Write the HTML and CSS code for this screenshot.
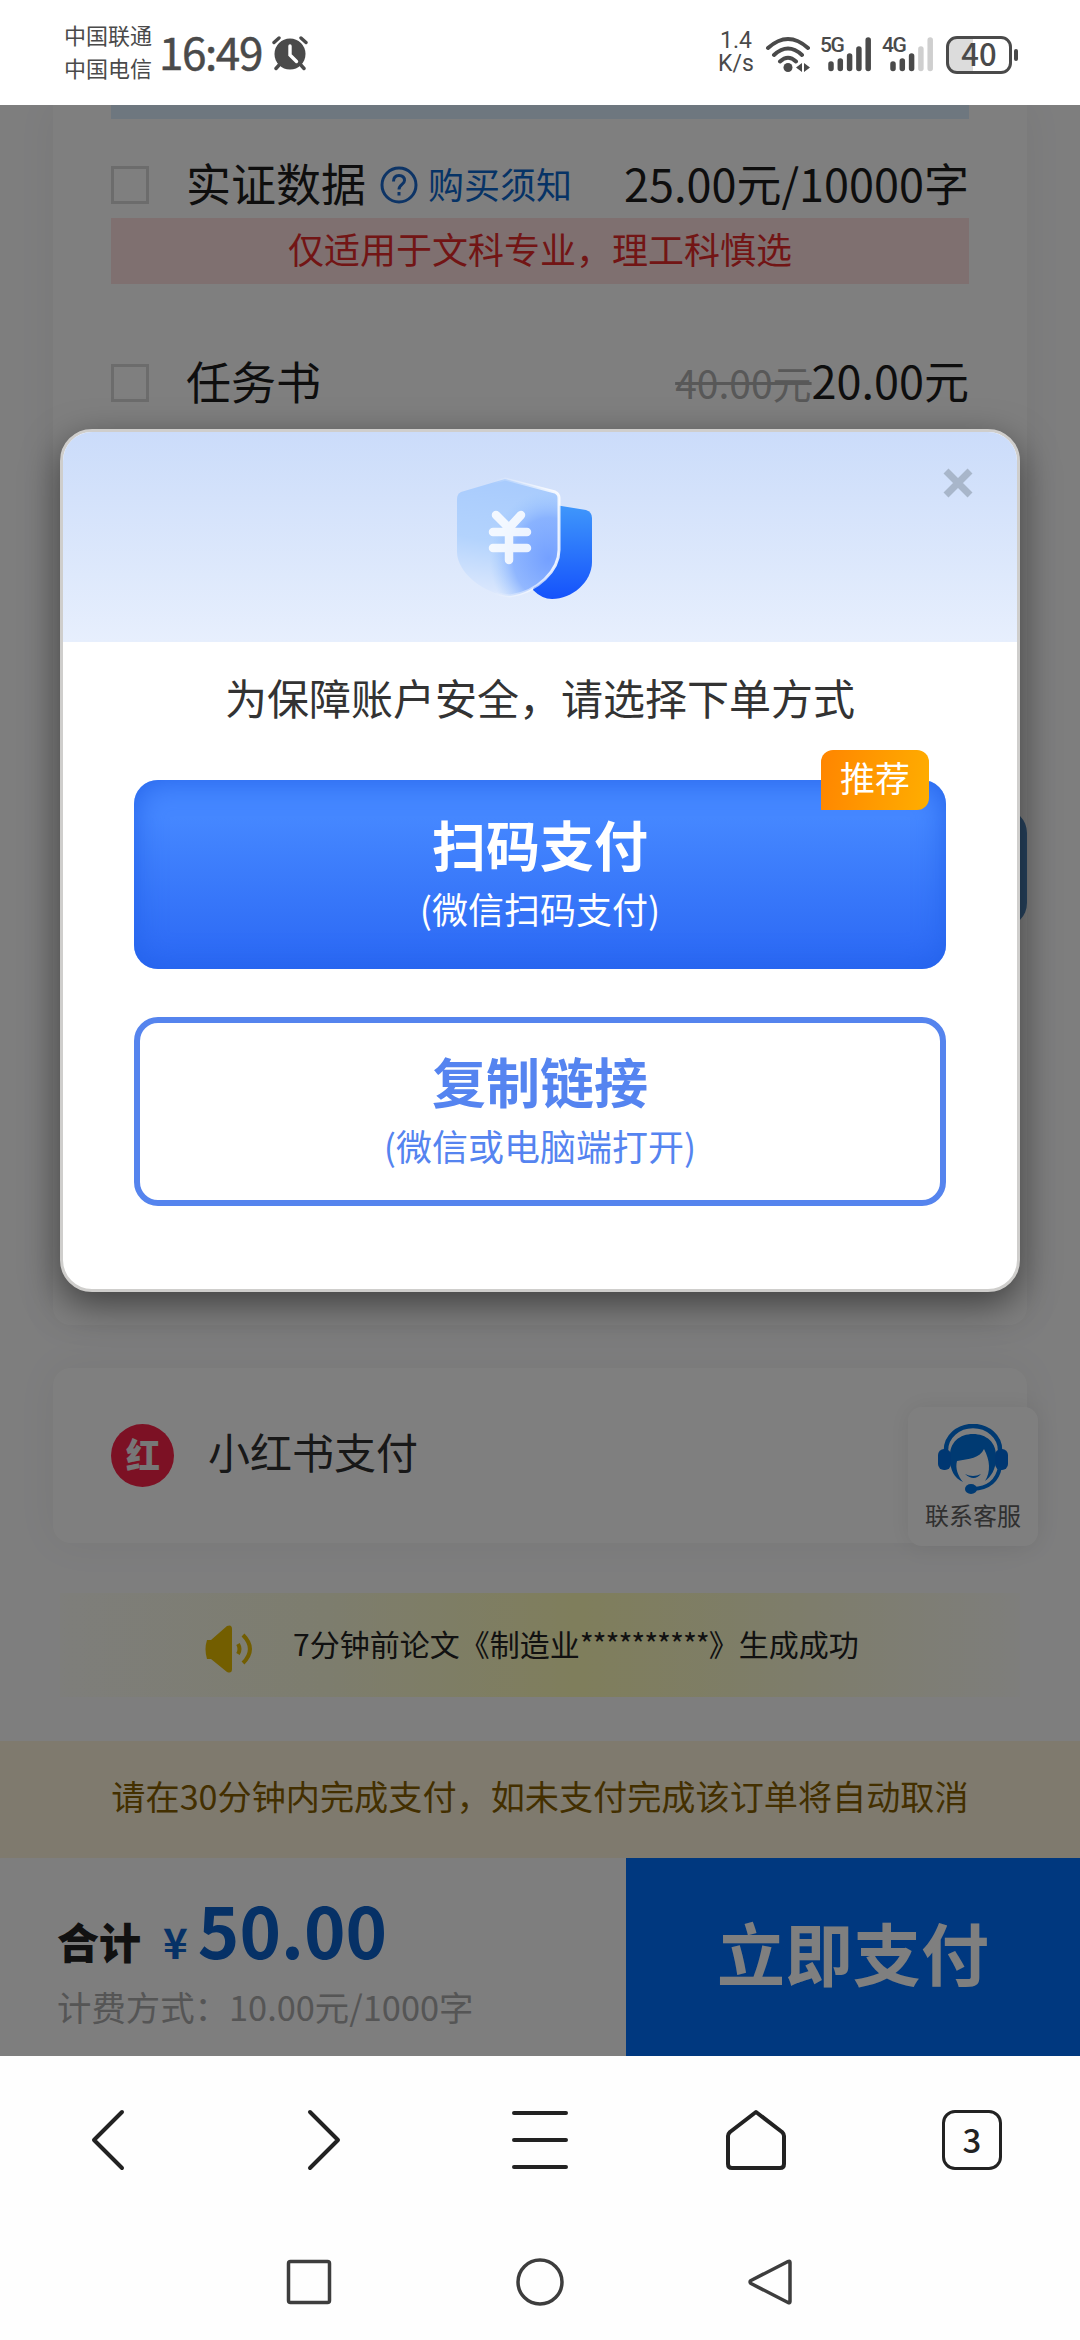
FILE: index.html
```html
<!DOCTYPE html>
<html lang="zh-CN">
<head>
<meta charset="utf-8">
<title>订单支付</title>
<link rel="stylesheet" href="styles.css">
</head>
<body>
<div class="screen">
  <header class="status">
    <div class="carriers"><span>中国联通</span><span>中国电信</span></div>
    <div class="clock">16:49</div>
    <svg class="alarm" width="36" height="36" viewBox="0 0 36 36" fill="none" stroke="#4a4a4a" stroke-width="3.4" stroke-linecap="round">
      <circle cx="18" cy="19" r="15.5" fill="#4a4a4a" stroke="none"/>
      <path d="M2 7.5 7 3M34 7.5 29 3M8 29l-4 4.500M28 29l4 4.500"/>
      <path d="M18 11v9l6.500 6.500" stroke="#fff"/>
    </svg>
    <div class="status-right">
      <div class="speed"><span>1.4</span><span>K/s</span></div>
      <svg width="46" height="38" viewBox="0 0 46 38" fill="none" stroke="#4a4a4a" stroke-width="4" stroke-linecap="round">
        <path d="M3 12Q23-6 43 12M9 19Q23 6 37 19M15 25.500Q23 18 31 25.500"/>
        <circle cx="23" cy="31.500" r="4.500" fill="#4a4a4a" stroke="none"/>
        <path d="M37 27v9l-6-4.500zM39 27v9l6-4.500z" fill="#4a4a4a" stroke="none"/>
      </svg>
      <div class="signal sig5"><span class="net">5G</span>
        <svg width="44" height="36" viewBox="0 0 44 36" stroke="#4a4a4a" stroke-width="5.500" stroke-linecap="round"><path d="M3 27v4.500M12.300 24v7.500M21.600 19v12.500M30.900 12v19.500M40.200 3v28.500"/></svg>
      </div>
      <div class="signal sig4"><span class="net">4G</span>
        <svg width="44" height="36" viewBox="0 0 44 36" stroke="#4a4a4a" stroke-width="5.500" stroke-linecap="round"><path d="M3 27v4.500M12.300 24v7.500M21.600 19v12.500"/><path d="M30.900 12v19.500M40.200 3v28.500" stroke="#cfcfcf"/></svg>
      </div>
      <div class="battery"><span>40</span></div><i class="nub"></i>
    </div>
  </header>

  <main class="page">
    <section class="card options">
      <div class="strip"></div>
      <div class="row first">
        <i class="check"></i><span class="name">实证数据</span>
        <svg class="help" width="38" height="38" viewBox="0 0 38 38" fill="none" stroke="#1b69cc" stroke-width="3"><circle cx="19" cy="19" r="17"/><path d="M13.500 15.500q0-6 5.500-6t5.500 5c0 4-5.500 4-5.500 9M19 26v3.500"/></svg>
        <span class="link">购买须知</span><span class="price">25.00元/10000字</span>
      </div>
      <div class="warn">仅适用于文科专业，理工科慎选</div>
      <div class="row second">
        <i class="check"></i><span class="name">任务书</span>
        <span class="price"><s>40.00元</s>20.00元</span>
      </div>
      <div class="apply"></div>
    </section>

    <section class="card pay">
      <svg width="63" height="63" viewBox="0 0 63 63"><circle cx="31.500" cy="31.500" r="31.500" fill="#f92348"/></svg>
      <span class="red-mark">红</span>
      <span>小红书支付</span>
    </section>

    <div class="notice">
      <svg width="50" height="48" viewBox="0 0 50 48" fill="none" stroke="#e6bc00" stroke-width="4"><path d="M2 15h4L22 1Q27-1 27 4v40q0 5-5 3L6 34H2Q-1 24 2 15Z" fill="#e6bc00" stroke="none"/><path d="M33 19q3 5 0 10M38 10q14 14 0 28"/></svg>
      <p>7分钟前论文《制造业<span class="stars">**********</span>》生成成功</p>
    </div>

    <div class="deadline">请在30分钟内完成支付，如未支付完成该订单将自动取消</div>
    <div class="checkout">
      <div class="total">
        <div class="sum"><b>合计</b><span class="yen">¥</span><span class="amount">50.00</span></div>
        <div class="rate">计费方式：10.00元/1000字</div>
      </div>
      <div class="pay-now">立即支付</div>
    </div>

    <aside class="service">
      <svg width="70" height="70" viewBox="0 0 70 70">
        <path d="M8 26a27 24 0 0 1 54 0" fill="none" stroke="#0074e4" stroke-width="4.500"/>
        <path d="M12 34C11 18 22 10 35 10s24 8 23 24c0 11-5 19-11 23 6-9 5-21-1-32-4 9-15 10-27 12-2 7 1 15 6 21-9-4-13-12-13-24Z" fill="#0074e4"/>
        <rect x="0" y="25" width="13" height="21" rx="6" fill="#006fe4"/><rect x="57" y="25" width="13" height="21" rx="6" fill="#006fe4"/>
        <path d="M27 50q8 4 16 0-7 8-16 0Z" fill="#0074e4"/>
        <path d="M62 43Q58 64 35 65" fill="none" stroke="#0074e4" stroke-width="4"/><ellipse cx="33" cy="65" rx="6" ry="5" fill="#0074e4"/>
      </svg>
      <span>联系客服</span>
    </aside>

    <div class="overlay">
      <section class="modal">
        <div class="modal-head">
          <svg class="shield" width="140" height="126" viewBox="0 0 140 126">
            <defs>
              <linearGradient id="back" x1="0" y1="0" x2="0" y2="1"><stop stop-color="#4098fb"/><stop offset="1" stop-color="#1552fb"/></linearGradient>
              <linearGradient id="front" x1=".55" y1="0" x2=".4" y2="1"><stop stop-color="#a8cbfd"/><stop offset=".55" stop-color="#b3d3fd"/><stop offset="1" stop-color="#dce8fd"/></linearGradient>
              <linearGradient id="edge" x1="0" y1="0" x2="1" y2="0"><stop offset=".35" stop-color="#fff" stop-opacity="0"/><stop offset=".95" stop-color="#fff" stop-opacity=".85"/></linearGradient>
              <radialGradient id="glow" cx=".9" cy=".68" r=".58"><stop stop-color="#74a0ff"/><stop offset=".6" stop-color="#7da9ff" stop-opacity=".75"/><stop offset="1" stop-color="#9cc6ff" stop-opacity="0"/></radialGradient>
            </defs>
            <path d="M95 29 132 35q6 2 6 8v44c0 20-20 37-40 37q-10 0-19-9Z" fill="url(#back)"/>
            <path d="M51 4 101 17q4 2 4 6v52c0 20-21 42-49 46-27-2-53-24-53-44V24q0-5 4-7Z" fill="url(#front)"/>
            <path d="M51 4 101 17q4 2 4 6v52c0 20-21 42-49 46-27-2-53-24-53-44V24q0-5 4-7Z" fill="url(#glow)" stroke="url(#edge)" stroke-width="3"/>
            <path d="M42 40 55 53 67 40M39 57H73M39 73H73M55 53V85" fill="none" stroke="#fff" stroke-opacity=".85" stroke-width="8.500" stroke-linecap="round" stroke-linejoin="round"/>
          </svg>
          <svg class="close" width="30" height="30" viewBox="0 0 30 30" stroke="#a8b6ca" stroke-width="7"><path d="M3 3 27 27M27 3 3 27"/></svg>
        </div>
        <div class="modal-body">
          <h1>为保障账户安全，请选择下单方式</h1>
          <div class="choice primary"><strong>扫码支付</strong><span>(微信扫码支付)</span><em>推荐</em></div>
          <div class="choice outline"><strong>复制链接</strong><span>(微信或电脑端打开)</span></div>
        </div>
      </section>
    </div>
  </main>

  <nav class="browser">
    <svg viewBox="0 0 64 64"><path d="M46 4 18 32 46 60"/></svg>
    <svg viewBox="0 0 64 64"><path d="M18 4 46 32 18 60"/></svg>
    <svg viewBox="0 0 64 64"><path d="M6 5H58M6 32H58M6 59H58"/></svg>
    <svg viewBox="0 0 64 64"><path d="M32 4 58 24q2 2 2 4v28q0 4-4 4H8q-4 0-4-4V28q0-2 2-4Z"/></svg>
    <div class="tabs"><span>3</span></div>
  </nav>
  <nav class="system">
    <svg viewBox="0 0 50 50"><rect x="4.500" y="4.500" width="41" height="41" rx="2"/></svg>
    <svg viewBox="0 0 50 50"><circle cx="25" cy="25" r="22"/></svg>
    <svg viewBox="0 0 50 50"><path d="M5 23.500 42 4.500q2-1 2 1v39q0 2-2 1L5 26.500q-2-1.500 0-3Z"/></svg>
  </nav>
</div>
</body>
</html>
```

FILE: styles.css
```css
* { box-sizing: border-box; margin: 0; padding: 0; }
body { font-family: "Noto Sans CJK SC", sans-serif; background: #fdfdfd; }
.screen { width: 1080px; height: 2340px; display: flex; flex-direction: column; overflow: hidden; white-space: nowrap; }
.status { height: 105px; display: flex; align-items: center; padding: 0 62px 0 64px; color: #4a4a4a; background: #fff; }
.carriers { display: flex; flex-direction: column; font-size: 22px; line-height: 33px; width: 88px; margin-bottom: 3px; }
.clock { width: 106px; margin-left: 7px; margin-bottom: 3px; font-size: 44px; font-weight: 400; line-height: 60px; letter-spacing: -1.4px; -webkit-text-stroke: .5px #4a4a4a; }
.alarm { margin-left: 7px; margin-top: 1px; }
.status-right { margin-left: auto; display: flex; align-items: center; margin-top: 4px; }
.speed { display: flex; flex-direction: column; align-items: center; font: 23px/23px Roboto, sans-serif; width: 38px; margin-right: 10px; margin-bottom: 2px; }
.speed span { height: 23px; line-height: 20px; }
.signal { position: relative; width: 52px; height: 36px; display: flex; justify-content: flex-end; margin-left: 9px; }
.sig4 { margin-left: 10px; }
.net { position: absolute; left: 0; top: -2px; font: 500 21px/21px Roboto, sans-serif; letter-spacing: -1.5px; }
.battery { width: 66px; height: 38px; margin-left: 12px; border: 3px solid #4a4a4a; border-radius: 11px; background: linear-gradient(90deg, #dcdcdc 40%, #fff 40%); display: flex; align-items: center; justify-content: center; font-size: 31px; font-weight: 500; line-height: 28px; }
.battery span { margin-top: -4px; }
.nub { width: 4px; height: 12px; margin-left: 2px; border-radius: 2px; background: #4a4a4a; }

.page { position: relative; height: 1951px; display: flex; flex-direction: column; background: #fcfcfd; overflow: hidden; }
.card { margin: 0 53px; background: #fff; border-radius: 18px; box-shadow: 0 0 42px rgba(0,0,0,.055); }
.options { height: 1220px; padding: 0 58px; display: flex; flex-direction: column; border-radius: 0 0 18px 18px; }
.strip { height: 14px; background: #dceeff; }
.row { display: flex; align-items: center; height: 60px; font-size: 45px; line-height: 56px; color: #1d1d1d; }
.row span { padding-bottom: 4px; }
.first { margin-top: 36px; }
.second { margin-top: 69px; margin-bottom: -2px; }
.check { width: 38px; height: 38px; border: 3px solid #d8d8d8; }
.name { margin-left: 37px; }
.help { margin-left: 14px; }
.row .link { margin-left: 10px; font-size: 36px; color: #0d66cc; }
.price { margin-left: auto; }
.price s { font-size: 39px; color: #b0b0b0; }
.warn { margin-top: 3px; height: 66px; line-height: 60px; text-align: center; font-size: 36px; color: #e52b2b; background: #ffe0e0; }
.apply { width: 200px; height: 118px; margin: 398px -58px 0 auto; background: #5088c0; border-radius: 24px; }
.pay { height: 175px; margin-top: 43px; padding: 0 58px; display: flex; align-items: center; position: relative; font-size: 42px; color: #303030; }
.pay > span:last-child { margin-left: 34px; margin-top: -10px; }
.red-mark { position: absolute; left: 73px; top: 68px; width: 33px; font-size: 34px; line-height: 36px; font-weight: 900; color: #eee; text-align: center; }
.notice { height: 104px; margin: 50px 60px 0; display: flex; align-items: center; padding-left: 145px; font-size: 30px; color: #222; background: linear-gradient(90deg, #fcfcf6, #fbfbdc 28%, #fffcb8 54%, #fcfbd8 78%, #fcfcf8); }
.notice svg { margin-top: 8px; }
.notice p { margin-left: 38px; margin-top: -5px; }
.stars { letter-spacing: -1.1px; }
.deadline { height: 117px; margin-top: 44px; line-height: 109px; text-align: center; font-size: 34.15px; color: #875f00; background: #fff5dd; }
.checkout { display: flex; height: 198px; }
.total { width: 626px; padding: 26px 0 0 57px; }
.sum { display: flex; align-items: baseline; height: 94px; line-height: 88px; color: #0c62cc; font-weight: 700; }
.sum b { font-size: 42px; color: #222; }
.yen { font-size: 42px; margin-left: 22px; }
.amount { font-size: 70.5px; margin-left: 10px; }
.rate { font-size: 34.4px; line-height: 56px; color: #aaa; }
.pay-now { flex: 1; background: #0070ff; color: #fff; font-size: 68px; font-weight: 700; line-height: 188px; text-align: center; }
.service { position: absolute; left: 908px; top: 1302px; width: 130px; height: 139px; padding-top: 17px; border-radius: 14px; background: #fff; box-shadow: 0 0 24px rgba(0,0,0,.08); display: flex; flex-direction: column; align-items: center; font-size: 24px; line-height: 42px; color: #606060; }
.overlay { position: absolute; inset: 0; background: rgba(0,0,0,.5); }

.modal { position: absolute; left: 60px; top: 324px; width: 960px; height: 863px; border: 3px solid #cfcecc; border-radius: 32px; background: #fff; box-shadow: 0 12px 36px rgba(0,0,0,.5); display: flex; flex-direction: column; }
.modal-head { height: 210px; padding-top: 43px; border-radius: 29px 29px 0 0; background: linear-gradient(#cbdcfa, #e7effd); display: flex; justify-content: space-between; align-items: flex-start; padding-left: 391px; padding-right: 44px; }
.close { margin-top: -7px; }
.modal-body { padding: 0 71px; display: flex; flex-direction: column; }
h1 { margin-top: 25px; font-size: 42px; font-weight: 400; line-height: 60px; text-align: center; color: #333; }
.choice { position: relative; height: 189px; border-radius: 24px; display: flex; flex-direction: column; align-items: center; }
.choice strong { font-size: 54px; font-weight: 700; line-height: 70px; }
.choice span { font-size: 36px; line-height: 58px; }
.primary { margin-top: 53px; padding-top: 29px; color: #fff; background: linear-gradient(#4587ff 20%, #2b68f4); box-shadow: inset 0 0 30px #2463ea; }
.outline { margin-top: 48px; padding-top: 23px; color: #5584f0; border: 6px solid #5584ee; }
.choice em { position: absolute; right: 17px; top: -30px; width: 108px; height: 60px; border-radius: 12px 12px 12px 0; background: linear-gradient(100deg, #ff8500, #ffae00); font-style: normal; font-size: 35px; line-height: 54px; text-align: center; }

.browser { height: 168px; display: grid; grid-template-columns: repeat(5, 1fr); align-items: center; justify-items: center; background: #fefefe; }
.browser svg { width: 64px; height: 64px; fill: none; stroke: #222; stroke-width: 4; stroke-linecap: round; stroke-linejoin: round; }
.tabs { width: 60px; height: 60px; border: 3px solid #222; border-radius: 13px; display: flex; align-items: center; justify-content: center; font-size: 33px; font-weight: 500; line-height: 50px; color: #222; }
.tabs span { margin-top: -3px; }
.system { height: 116px; padding: 0 193px; display: grid; grid-template-columns: repeat(3, 1fr); align-items: center; justify-items: center; background: #fefefe; }
.system svg { width: 50px; height: 50px; fill: none; stroke: #3d3d3d; stroke-width: 3.5; stroke-linejoin: round; }
```
